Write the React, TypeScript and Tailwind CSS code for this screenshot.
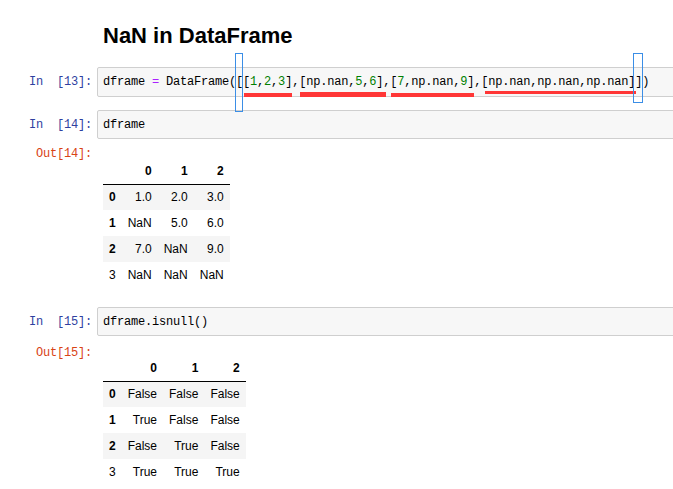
import React from 'react';

const mono = "font-['Liberation_Mono',monospace] text-[12px] tracking-[-0.2px]";

const Num = ({ v }: { v: string }) => <span className="text-[#008000]">{v}</span>;

const InputCell: React.FC<{ n: number; h: string; mt: string; children: React.ReactNode }> = ({ n, h, mt, children }) => (
  <div className={`flex items-center ${mt}`}>
    <div className={`w-[97px] shrink-0 pr-[5px] text-right whitespace-pre text-[#303F9F] ${mono}`}>
      {`In\u00a0\u00a0[${n}]:`}
    </div>
    <div
      className={`flex flex-1 items-center mr-[-20px] ${h} rounded-[2px] border border-[#cfcfcf] bg-[#f7f7f7] pl-[5px] whitespace-pre text-black ${mono}`}
    >
      {children}
    </div>
  </div>
);

const Table: React.FC<{ rows: string[][] }> = ({ rows }) => (
  <table className="border-collapse font-['Liberation_Sans',Arial,sans-serif] text-[12px] text-black">
    <thead>
      <tr>
        <th className="h-[25px] border-b border-black px-[6px]"></th>
        {['0', '1', '2'].map((c) => (
          <th key={c} className="h-[25px] border-b border-black px-[6px] text-right font-bold">
            {c}
          </th>
        ))}
      </tr>
    </thead>
    <tbody>
      {rows.map((r, i) => (
        <tr key={i} className={i % 2 === 0 ? 'bg-[#f5f5f5]' : ''}>
          <th className={`h-[26px] px-[6px] text-right ${i === 3 ? 'font-normal' : 'font-bold'}`}>{i}</th>
          {r.map((v, j) => (
            <td key={j} className="h-[26px] px-[6px] text-right">
              {v}
            </td>
          ))}
        </tr>
      ))}
    </tbody>
  </table>
);

const OutputCell: React.FC<{ n: number; pt: string; tpt: string; rows: string[][] }> = ({ n, pt, tpt, rows }) => (
  <div className="flex">
    <div className={`w-[97px] shrink-0 pr-[5px] ${pt} text-right leading-[16px] whitespace-pre text-[#D84315] ${mono}`}>
      {`Out[${n}]:`}
    </div>
    <div className={`pl-[6px] ${tpt}`}>
      <Table rows={rows} />
    </div>
  </div>
);

export default function App() {
  return (
    <div className="relative h-[489px] w-[673px] overflow-hidden bg-white">
      <h2 className="mt-[23px] pl-[103px] font-['Liberation_Sans',Arial,sans-serif] text-[22px] font-bold leading-[26px] text-black">
        NaN in DataFrame
      </h2>

      <InputCell n={13} h="h-[30px]" mt="mt-[18px]">
        dframe <span className="text-[#AA22FF]">=</span> DataFrame([[<Num v="1" />,<Num v="2" />,<Num v="3" />],[np.nan,
        <Num v="5" />,<Num v="6" />],[<Num v="7" />,np.nan,<Num v="9" />],[np.nan,np.nan,np.nan]])
      </InputCell>

      <InputCell n={14} h="h-[29px]" mt="mt-[13px]">
        dframe
      </InputCell>
      <OutputCell
        n={14}
        pt="pt-[7px]"
        tpt="pt-[20px]"
        rows={[
          ['1.0', '2.0', '3.0'],
          ['NaN', '5.0', '6.0'],
          ['7.0', 'NaN', '9.0'],
          ['NaN', 'NaN', 'NaN'],
        ]}
      />

      <InputCell n={15} h="h-[29px]" mt="mt-[19px]">
        dframe.isnull()
      </InputCell>
      <OutputCell
        n={15}
        pt="pt-[9px]"
        tpt="pt-[20px]"
        rows={[
          ['False', 'False', 'False'],
          ['True', 'False', 'False'],
          ['False', 'True', 'False'],
          ['True', 'True', 'True'],
        ]}
      />

      {/* annotation marks */}
      <div className="absolute left-[244px] top-[93px] h-[4px] w-[48px] bg-[#ff3636]" />
      <div className="absolute left-[300px] top-[92px] h-[5px] w-[86px] bg-[#ff3636]" />
      <div className="absolute left-[391px] top-[93px] h-[4px] w-[83px] bg-[#ff3636]" />
      <div className="absolute left-[485px] top-[91px] h-[3px] w-[151px] bg-[#ff3636]" />
      <div className="absolute left-[235px] top-[53px] h-[59px] w-[8px] border border-[#3b8ee6]" />
      <div className="absolute left-[633px] top-[53px] h-[50px] w-[10px] border border-[#3b8ee6]" />
    </div>
  );
}
